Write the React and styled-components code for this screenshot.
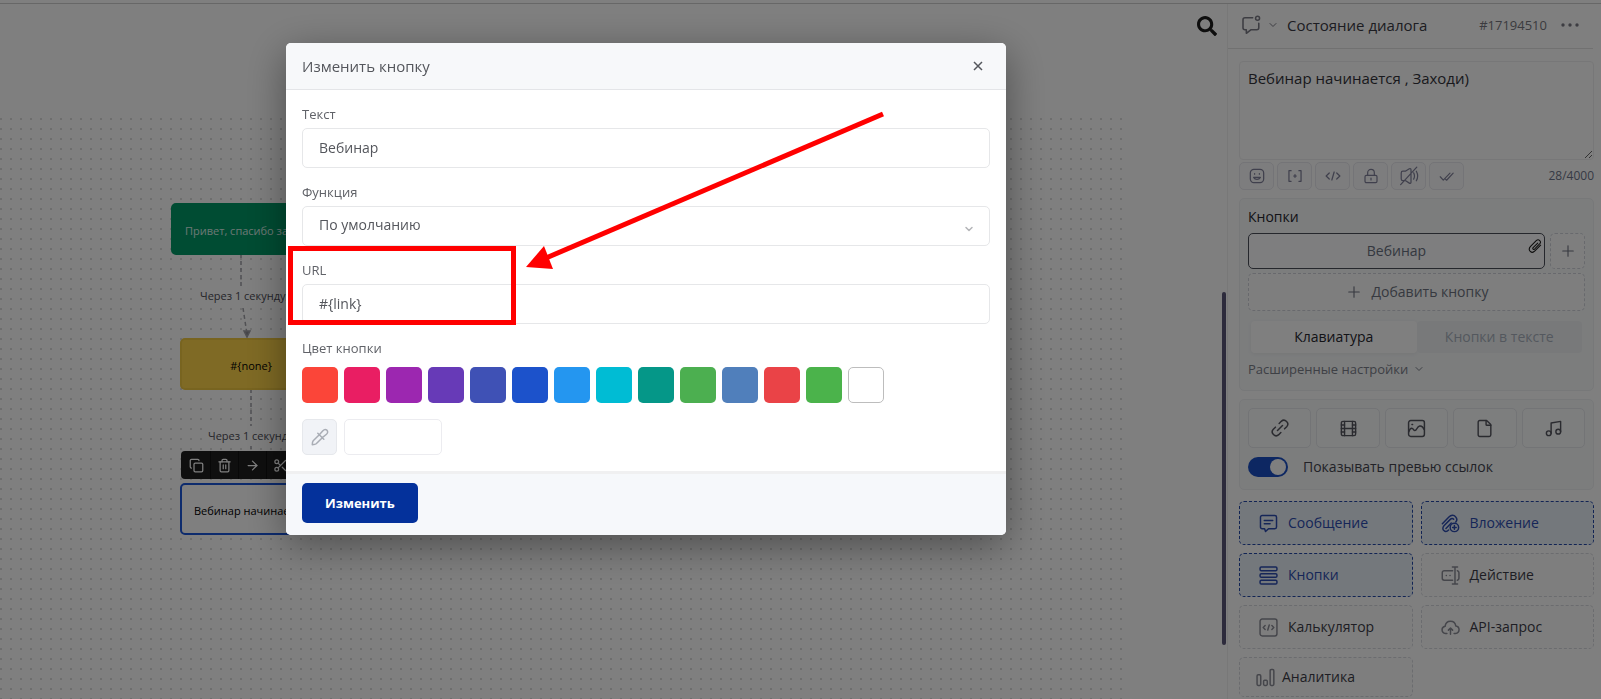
import React, { useState } from 'react';
import styled, { createGlobalStyle, css } from 'styled-components';
import {
  ArrowRight, ChevronDown, Copy, File, Film, Lock, Music, Plus, Scissors, Trash2,
} from 'lucide-react';
import { FaSearch } from 'react-icons/fa';

const GlobalStyle = createGlobalStyle`
  * {
    box-sizing: border-box;
  }
  body {
    margin: 0;
    background: #ffffff;
    color: #3b3f4a;
    font-family: 'Open Sans', 'Noto Sans', sans-serif;
    font-size: 14px;
    line-height: 20px;
  }
  button, input, select, textarea {
    font: inherit;
    color: inherit;
    margin: 0;
  }
`;

const Page = styled.div`
  display: flex;
  flex-direction: column;
  height: 100vh;
  overflow: hidden;
`;
const TopLine = styled.div`
  height: 4px;
  flex: none;
  border-bottom: 1px solid #cfcfcf;
`;
const Workspace = styled.div`
  display: flex;
  flex: 1;
  min-height: 0;
`;

/* canvas with the scheme */
const Canvas = styled.main`
  position: relative;
  flex: 1;
  min-width: 0;
  padding: 110px 100px 0 0;
`;
const Dots = styled.div`
  height: 100%;
  background-image: radial-gradient(circle at 1px 5px, #8c8c8c, transparent 1px);
  background-size: 10px 10px;
`;
const SearchButton = styled.button`
  position: absolute;
  top: 12px;
  right: 10px;
  padding: 0;
  border: 0;
  background: none;
  color: #1c1c1c;
  line-height: 0;
`;
const ScrollThumb = styled.div`
  position: absolute;
  top: 288px;
  right: 1px;
  width: 4px;
  height: 353px;
  border-radius: 2px;
  background: #5a5678;
`;
const Edges = styled.svg`
  position: absolute;
  left: 0;
  top: 0;
  width: 400px;
  height: 500px;
  fill: none;
  stroke: #a0a0a6;
  stroke-width: 1.5;
  stroke-dasharray: 4 3;
`;
const Node = styled.div`
  position: absolute;
  left: ${({ $x }) => $x}px;
  top: ${({ $y }) => $y}px;
  width: 142px;
  height: 52px;
  padding: 3px 12px 0;
  display: flex;
  align-items: center;
  justify-content: ${({ $center }) => ($center ? 'center' : 'flex-start')};
  border: 2px solid ${({ $border }) => $border};
  border-radius: 5px;
  background: ${({ $bg }) => $bg};
  color: ${({ $color }) => $color || '#000000'};
  font-size: 11px;
  white-space: nowrap;
  overflow: hidden;
`;
const EdgeLabel = styled.div`
  position: absolute;
  left: ${({ $x }) => $x}px;
  top: ${({ $y }) => $y}px;
  background: #ffffff;
  color: #4c4c55;
  font-size: 11px;
  white-space: nowrap;
`;
const NodeToolbar = styled.div`
  position: absolute;
  left: 181px;
  top: 447px;
  display: flex;
  height: 28px;
  padding-left: 2px;
  border-radius: 4px;
  background: #1f1f1f;
  overflow: hidden;
`;
const NodeTool = styled.button`
  width: 28px;
  padding: 0;
  display: flex;
  align-items: center;
  justify-content: center;
  border: 0;
  border-right: 1px solid #111111;
  background: none;
  color: #ffffff;
`;

/* right panel */
const Sidebar = styled.aside`
  width: 374px;
  flex: none;
  border-left: 1px solid #f0f0f0;
  display: flex;
  flex-direction: column;
`;
const SideHeader = styled.header`
  height: 45px;
  flex: none;
  margin-right: 8px;
  padding: 0 8px 2px 13px;
  display: flex;
  align-items: center;
  gap: 6px;
  border-bottom: 1px solid #e2e2e2;
  color: #7a7a85;
`;
const SideTitle = styled.h1`
  flex: 1;
  margin: 0 0 0 2px;
  color: #3a3a44;
  font-size: 15px;
  font-weight: 400;
`;
const Hash = styled.span`
  margin-right: 2px;
  color: #777780;
  font-size: 13px;
`;
const PlainButton = styled.button`
  padding: 0;
  border: 0;
  background: none;
  color: inherit;
  line-height: 0;
`;
const SideBody = styled.div`
  padding: 12px 7px 0 11px;
  display: flex;
  flex-direction: column;
  gap: 8px;
`;
const MessageBlock = styled.div`
  display: flex;
  flex-direction: column;
  gap: 2px;
`;
const Message = styled.textarea`
  display: block;
  width: 100%;
  height: 99px;
  padding: 6px 8px;
  border: 1px solid #efeff1;
  border-radius: 4px;
  outline: 0;
  background: #fefefe;
  color: #33333a;
  font-size: 15px;
`;
const FormatBar = styled.div`
  display: flex;
  align-items: center;
  gap: 3px;
`;
const FormatButton = styled.button`
  width: 35px;
  height: 28px;
  padding: 0;
  display: flex;
  align-items: center;
  justify-content: center;
  border: 1px solid #e8e8ee;
  border-radius: 5px;
  background: #fafafc;
  color: #80819a;
`;
const Counter = styled.span`
  margin-left: auto;
  color: #6d748a;
  font-size: 12px;
`;
const Card = styled.section`
  padding: 8px;
  display: flex;
  flex-direction: column;
  border: 1px solid #eff1f3;
  border-radius: 5px;
  background: #f8fafb;
`;
const CardTitle = styled.h2`
  margin: 0 0 6px;
  color: #26262e;
  font-size: 14px;
  font-weight: 500;
`;
const ButtonRow = styled.div`
  display: flex;
  gap: 5px;
  margin-bottom: 4px;
`;
const KeyButton = styled.button`
  position: relative;
  flex: 1;
  height: 36px;
  border: 1px solid #4a4e58;
  border-radius: 5px;
  background: #fdfdfe;
  color: #697080;
  font-size: 14px;
`;
const ClipMark = styled.svg`
  position: absolute;
  top: 5px;
  right: 2px;
  fill: none;
  stroke: #1c1c1c;
`;
const DashedButton = styled.button`
  height: ${({ $square }) => ($square ? 36 : 38)}px;
  width: ${({ $square }) => ($square ? '35px' : 'auto')};
  padding: 0;
  display: flex;
  align-items: center;
  justify-content: center;
  gap: 9px;
  border: 1px dashed #d0d3da;
  border-radius: 5px;
  background: #fcfdfd;
  color: #6e7380;
  font-size: 14px;
`;
const Tabs = styled.div`
  display: flex;
  height: 32px;
  margin: 10px 3px 0;
`;
const Tab = styled.button`
  flex: 1;
  padding: 0;
  border: 0;
  border-radius: 4px;
  background: ${({ $active }) => ($active ? '#ffffff' : '#f0f3f5')};
  color: ${({ $active }) => ($active ? '#26262e' : '#a9b1bd')};
  box-shadow: ${({ $active }) => ($active ? '0 1px 4px rgba(0, 0, 0, 0.06)' : 'none')};
`;
const More = styled.button`
  margin: 5px 0 2px;
  padding: 0;
  display: flex;
  align-items: center;
  gap: 5px;
  border: 0;
  background: none;
  color: #7c808a;
  font-size: 13px;
  line-height: 22px;
`;
const MediaGrid = styled.div`
  display: grid;
  grid-template-columns: repeat(5, 1fr);
  gap: 5px;
`;
const MediaButton = styled.button`
  height: 40px;
  padding: 0;
  display: flex;
  align-items: center;
  justify-content: center;
  border: 1px solid #e6e8ec;
  border-radius: 5px;
  background: #fbfcfd;
  color: #55565f;
`;
const PreviewRow = styled.label`
  display: flex;
  align-items: center;
  gap: 15px;
  margin: 8px 0 3px;
  line-height: 22px;
  color: #44454f;
`;
const Switch = styled.input`
  appearance: none;
  width: 40px;
  height: 20px;
  padding: 2px;
  border-radius: 10px;
  background: #c5c9d2;
  &::before {
    content: '';
    display: block;
    width: 16px;
    height: 16px;
    border-radius: 50%;
    background: #ffffff;
  }
  &:checked {
    background: #1a4fc4;
  }
  &:checked::before {
    margin-left: auto;
  }
`;
const TileGrid = styled.div`
  display: grid;
  grid-template-columns: 1fr 1fr;
  grid-template-rows: repeat(3, 44px) 40px;
  gap: 8px;
  margin-top: 3px;
`;
const Tile = styled.button`
  padding: 0 19px;
  display: flex;
  align-items: center;
  gap: 10px;
  border: 1px dashed #d6d8de;
  border-radius: 5px;
  background: #fdfdfd;
  color: #3c3d48;
  font-size: 14px;
  svg {
    color: #8b8c96;
  }
  ${({ $compact }) => $compact && css`
    padding: 0 16px;
    gap: 7px;
  `}
  ${({ $active }) => $active && css`
    border-color: #2448a8;
    background: #e9f0f8;
    color: #2c4cb0;
    svg {
      color: #2c4cb0;
    }
  `}
`;

/* modal */
const Backdrop = styled.div`
  position: fixed;
  inset: 0;
  display: flex;
  align-items: flex-start;
  justify-content: center;
  padding: 43px 309px 0 0;
  background: rgba(0, 0, 0, 0.5);
`;
const Dialog = styled.form`
  position: relative;
  width: 720px;
  border-radius: 5px;
  background: #ffffff;
  color: #54565c;
  box-shadow: 0 10px 40px rgba(0, 0, 0, 0.4);
`;
const DialogHeader = styled.div`
  height: 47px;
  padding: 0 20px 0 16px;
  display: flex;
  align-items: center;
  justify-content: space-between;
  border-bottom: 1px solid #e4e5e8;
  border-radius: 5px 5px 0 0;
  background: #f7f8fa;
`;
const DialogTitle = styled.h2`
  margin: 0;
  font-size: 15px;
  font-weight: 400;
`;
const DialogBody = styled.div`
  padding: 14px 16px 16px;
`;
const Field = styled.div`
  position: relative;
  display: flex;
  flex-direction: column;
  gap: 4px;
  margin-bottom: 14px;
`;
const Label = styled.label`
  font-size: 13px;
  color: #606268;
`;
const controlStyle = css`
  width: 100%;
  height: 40px;
  padding: 0 16px 2px;
  border: 1px solid #e6e7e9;
  border-radius: 5px;
  outline: 0;
  background: #ffffff;
  font-size: 14px;
`;
const TextInput = styled.input`
  ${controlStyle}
`;
const Select = styled.select`
  ${controlStyle}
  appearance: none;
`;
const SelectArrow = styled(ChevronDown)`
  position: absolute;
  right: 15px;
  bottom: 11px;
  color: #b4b5b8;
  pointer-events: none;
`;
const Palette = styled.div`
  display: flex;
  gap: 6px;
  margin: 5px 0 2px;
`;
const Swatch = styled.button`
  width: 36px;
  height: 36px;
  padding: 0;
  border: ${({ $color }) => ($color === '#ffffff' ? '1px solid #bdbdbd' : '0')};
  border-radius: 5px;
  background: ${({ $color }) => $color};
`;
const CustomColor = styled.div`
  display: flex;
  gap: 7px;
`;
const Picker = styled.button`
  width: 35px;
  height: 36px;
  padding: 0;
  display: flex;
  align-items: center;
  justify-content: center;
  border: 1px solid #e6e8ec;
  border-radius: 5px;
  background: #f1f3f7;
`;
const HexInput = styled.input`
  width: 98px;
  height: 36px;
  padding: 0 8px;
  border: 1px solid #ececf0;
  border-radius: 5px;
  outline: 0;
`;
const DialogFooter = styled.div`
  padding: 9px 16px 12px;
  border-top: 3px solid #f0f0f1;
  border-radius: 0 0 5px 5px;
  background: #f6f8fb;
`;
const Submit = styled.button`
  height: 40px;
  padding: 0 23px;
  border: 0;
  border-radius: 5px;
  background: #04319b;
  color: #ffffff;
  font-size: 13px;
  font-weight: 700;
`;

/* red pointer marks over the dialog */
const Frame = styled.div`
  position: absolute;
  left: 2px;
  top: 203px;
  width: 228px;
  height: 79px;
  border: 5px solid #ff0000;
  pointer-events: none;
`;
const Arrow = styled.svg`
  position: absolute;
  left: 240px;
  top: 60px;
  width: 360px;
  height: 180px;
  pointer-events: none;
`;

function Svg({ size = 18, children }) {
  return (
    <svg
      width={size}
      height={size}
      viewBox="0 0 18 18"
      fill="none"
      stroke="currentColor"
      strokeWidth="1.4"
      strokeLinecap="round"
      strokeLinejoin="round"
    >
      {children}
    </svg>
  );
}

const stateIcon = (
  <Svg size={20}>
    <path d="M10.5 2.5H3.6c-1 0-1.8.8-1.8 1.8v7.2c0 1 .8 1.8 1.8 1.8h1.2v3.2l4-3.2h5.4c1 0 1.8-.8 1.8-1.8V7.4" />
    <circle cx="14.9" cy="3" r="1.8" />
  </Svg>
);

const formatIcons = {
  'Эмодзи': (
    <Svg size={16}>
      <rect x="1.5" y="1.5" width="15" height="15" rx="4" />
      <path d="M6.3 6.2v.8M11.7 6.2v.8M5.2 10.6c1.6 2.8 6 2.8 7.6 0z" />
    </Svg>
  ),
  'Переменная': (
    <Svg size={16}>
      <path d="M4.6 3H2.2v12h2.4M13.4 3h2.4v12h-2.4M7.5 9h3M9 7.5v3" />
    </Svg>
  ),
  'Код': (
    <Svg size={16}>
      <path d="M4.8 5.6L1.3 9l3.500 3.400M13.200 5.600L16.700 9l-3.500 3.400M10.300 4.500L7.700 13.500" />
    </Svg>
  ),
  'Защита': (
    <Lock size={16} strokeWidth={1.8}>
      <path d="M12 15v3" />
    </Lock>
  ),
  'Без звука': (
    <Svg size={20}>
      <path
        strokeWidth="1.1"
        d="M2 6.200c0-.9.600-1.500 1.500-1.500h2.200L9.300 2.500c.8-.4 1.500 0 1.500.8v11.400c0 .8-.7 1.200-1.500.7l-3.600-2.300H3.500c-.9 0-1.500-.6-1.500-1.500zM13.200 6.200c.9 1.700.9 3.900 0 5.600M15.600 4.700c1.500 2.700 1.500 5.900 0 8.600M16 1L1.500 16.800"
      />
    </Svg>
  ),
  'Прочитано': (
    <Svg size={15}>
      <path d="M1.500 9.300l3.600 4 8.100-8.300M7.800 12.200l1.300 1.300L17 5" />
    </Svg>
  ),
};

const imageIcon = (
  <Svg size={19}>
    <rect x="1.5" y="1.5" width="15" height="15" rx="2" />
    <path d="M1.800 12c.6-2.200 1.500-3.300 2.700-3.300 1.600 0 1.500 2.300 3 2.300 1.900 0 1.700-3.800 4.500-4.300 1.900-.3 3.400 1.300 4.200 3.300M4.700 5.200h.6" />
  </Svg>
);

const tiles = [
  {
    name: 'Сообщение',
    active: true,
    icon: (
      <Svg size={19}>
        <path d="M3 1.500h12c.9 0 1.600.7 1.600 1.600v9.200c0 .9-.7 1.600-1.600 1.600H9l-2.800 2.700-.9-2.700H3c-.9 0-1.600-.7-1.600-1.600V3.100c0-.9.7-1.600 1.600-1.600zM5 6.200h8M5 9.300h5.500" />
      </Svg>
    ),
  },
  {
    name: 'Вложение',
    active: true,
    icon: (
      <Svg size={19}>
        <path d="M1.300 9.200l6.200-6.400c2-2 4.800-2 6.300-.3 1.400 1.500 1.400 3.600.2 5M7.200 15.200c-1.400 1.500-3.300 1.600-4.500.5-1.300-1.200-1.200-3.100.1-4.500l6-6.100c1-1 2.400-1.100 3.200-.2M4.700 13.700l5-5.100" />
        <circle cx="12.7" cy="12.7" r="4" />
        <path d="M12.700 11v3.400M11 12.700h3.400" />
      </Svg>
    ),
  },
  {
    name: 'Кнопки',
    active: true,
    icon: (
      <Svg size={19}>
        <rect x="1" y="1" width="16" height="3.4" rx="1.2" />
        <rect x="1" y="7.3" width="16" height="3.4" rx="1.2" />
        <rect x="1" y="13.6" width="16" height="3.4" rx="1.2" />
      </Svg>
    ),
  },
  {
    name: 'Действие',
    icon: (
      <Svg size={19}>
        <path d="M11 4.500H3c-1 0-1.800.8-1.800 1.800v5.400c0 1 .8 1.800 1.800 1.800h8M15.500 4.500c.9.200 1.500.900 1.500 1.800v5.400c0 .9-.6 1.600-1.500 1.800M10.800 1h4.900M10.800 17h4.900M13.250 1v16M5 9h.1M8.500 9h.1" />
      </Svg>
    ),
  },
  {
    name: 'Калькулятор',
    icon: (
      <Svg size={19}>
        <rect x="1" y="1" width="16" height="16" rx="2" />
        <path d="M5.800 7.200L4 9l1.800 1.800M12.200 7.200L14 9l-1.800 1.800M9.700 6.600l-1.400 4.800" />
      </Svg>
    ),
  },
  {
    name: 'API-запрос',
    icon: (
      <Svg size={19}>
        <path d="M5.600 14.700H4.300C2.400 14.500 1 13 1 11.200c0-1.700 1.200-3 2.900-3.300C4.200 5 6.300 3 9 3c2.600 0 4.600 1.900 5 4.500 1.800.2 3.100 1.700 3.100 3.500 0 2-1.500 3.600-3.400 3.700h-1.300M9 15.500V9.700M7 11.500l2-2 2 2" />
      </Svg>
    ),
  },
  {
    name: 'Аналитика',
    compact: true,
    icon: (
      <Svg size={19}>
        <rect x="1" y="6.5" width="3.5" height="10" rx="1" />
        <rect x="7.2" y="11.5" width="3.5" height="5" rx="1" />
        <rect x="13.4" y="1.5" width="3.5" height="15" rx="1" />
      </Svg>
    ),
  },
];

const colors = [
  '#fb4539', '#e91e63', '#9c27b0', '#673ab7', '#3f51b5', '#1c52cb', '#2496f0',
  '#00bcd4', '#059788', '#4caf50', '#507fbb', '#ea4347', '#4bb34b', '#ffffff',
];

function Scheme() {
  return (
    <Canvas>
      <Dots />
      <Edges viewBox="0 0 400 500">
        <path d="M241 250V284M243 304L247 330" />
        <path d="M251 385V470" />
        <path d="M244 327h6l-3 6zM248 466h6l-3 6z" fill="#8c8c94" strokeDasharray="none" />
      </Edges>
      <Node $x={171} $y={199} $bg="#009966" $border="#009966" $color="#d8eee6">Привет, спасибо за</Node>
      <EdgeLabel $x={200} $y={282}>Через 1 секунду,</EdgeLabel>
      <Node $x={180} $y={334} $bg="#ffd54a" $border="#f0c840" $center>{'#{none}'}</Node>
      <EdgeLabel $x={208} $y={422}>Через 1 секунду</EdgeLabel>
      <NodeToolbar>
        <NodeTool type="button" aria-label="Копировать"><Copy size={15} strokeWidth={2} /></NodeTool>
        <NodeTool type="button" aria-label="Удалить"><Trash2 size={15} strokeWidth={2} /></NodeTool>
        <NodeTool type="button" aria-label="Перейти"><ArrowRight size={15} strokeWidth={2} /></NodeTool>
        <NodeTool type="button" aria-label="Вырезать"><Scissors size={15} strokeWidth={2} /></NodeTool>
      </NodeToolbar>
      <Node $x={180} $y={479} $bg="#ffffff" $border="#1a56db">Вебинар начинается</Node>
      <SearchButton type="button" aria-label="Поиск"><FaSearch size={20} /></SearchButton>
      <ScrollThumb />
    </Canvas>
  );
}

function SidePanel() {
  const [message, setMessage] = useState('Вебинар начинается , Заходи)');
  const [preview, setPreview] = useState(true);
  const [tab, setTab] = useState('Клавиатура');

  return (
    <Sidebar>
      <SideHeader>
        {stateIcon}
        <ChevronDown size={12} />
        <SideTitle>Состояние диалога</SideTitle>
        <Hash>#17194510</Hash>
        <PlainButton type="button" aria-label="Меню">
          <svg width="30" height="6" viewBox="0 0 30 6" fill="currentColor">
            <circle cx="8" cy="3" r="1.7" />
            <circle cx="15" cy="3" r="1.7" />
            <circle cx="22" cy="3" r="1.7" />
          </svg>
        </PlainButton>
      </SideHeader>
      <SideBody>
        <MessageBlock>
          <Message
            aria-label="Сообщение"
            spellCheck={false}
            value={message}
            onChange={(e) => setMessage(e.target.value)}
          />
          <FormatBar>
            {Object.keys(formatIcons).map((name) => (
              <FormatButton key={name} type="button" aria-label={name}>{formatIcons[name]}</FormatButton>
            ))}
            <Counter>{message.length}/4000</Counter>
          </FormatBar>
        </MessageBlock>

        <Card>
          <CardTitle>Кнопки</CardTitle>
          <ButtonRow>
            <KeyButton type="button">
              Вебинар
              <ClipMark width="14" height="14" viewBox="0 0 18 18" strokeWidth="1.4" strokeLinecap="round">
                <path d="M12.500 5.200L6.600 11.200c-1.200 1.300.5 3 1.800 1.800l6.500-6.600c3-3.200-1.200-7.200-4.300-4.200L3.300 9.600c-4.400 4.600 1.400 10 5.600 5.800l7.300-7.500" />
              </ClipMark>
            </KeyButton>
            <DashedButton type="button" $square aria-label="Добавить"><Plus size={18} strokeWidth={1.5} /></DashedButton>
          </ButtonRow>
          <DashedButton type="button"><Plus size={18} strokeWidth={1.5} />Добавить кнопку</DashedButton>
          <Tabs>
            {['Клавиатура', 'Кнопки в тексте'].map((name) => (
              <Tab key={name} type="button" $active={tab === name} onClick={() => setTab(name)}>{name}</Tab>
            ))}
          </Tabs>
          <More type="button">Расширенные настройки <ChevronDown size={12} /></More>
        </Card>

        <Card>
          <MediaGrid>
            <MediaButton type="button" aria-label="Ссылка">
              <svg width="20" height="20" viewBox="0 0 24 24" fill="none" stroke="currentColor" strokeWidth="1.8" strokeLinecap="round">
                <path d="M9 15l6-6M11 6.500l2.500-2.500a4.600 4.600 0 0 1 6.500 6.500L17.500 13M13 17.500L10.500 20A4.600 4.600 0 0 1 4 13.500L6.500 11" />
              </svg>
            </MediaButton>
            <MediaButton type="button" aria-label="Видео"><Film size={19} strokeWidth={1.8} /></MediaButton>
            <MediaButton type="button" aria-label="Картинка">{imageIcon}</MediaButton>
            <MediaButton type="button" aria-label="Файл"><File size={19} strokeWidth={1.8} /></MediaButton>
            <MediaButton type="button" aria-label="Аудио"><Music size={19} strokeWidth={1.8} /></MediaButton>
          </MediaGrid>
          <PreviewRow>
            <Switch type="checkbox" role="switch" checked={preview} onChange={(e) => setPreview(e.target.checked)} />
            Показывать превью ссылок
          </PreviewRow>
        </Card>

        <TileGrid>
          {tiles.map((tile) => (
            <Tile key={tile.name} type="button" $active={tile.active} $compact={tile.compact}>
              {tile.icon}
              {tile.name}
            </Tile>
          ))}
        </TileGrid>
      </SideBody>
    </Sidebar>
  );
}

function EditButtonDialog() {
  const [text, setText] = useState('Вебинар');
  const [url, setUrl] = useState('#{link}');
  const [hex, setHex] = useState('');

  return (
    <Dialog onSubmit={(e) => e.preventDefault()}>
      <DialogHeader>
        <DialogTitle>Изменить кнопку</DialogTitle>
        <PlainButton type="button" aria-label="Закрыть">
          <svg width="16" height="16" viewBox="0 0 16 16" stroke="currentColor" strokeWidth="1.5">
            <path d="M4 4l8 8M12 4l-8 8" />
          </svg>
        </PlainButton>
      </DialogHeader>
      <DialogBody>
        <Field>
          <Label htmlFor="text">Текст</Label>
          <TextInput id="text" value={text} onChange={(e) => setText(e.target.value)} />
        </Field>
        <Field>
          <Label htmlFor="func">Функция</Label>
          <Select id="func" defaultValue="default">
            <option value="default">По умолчанию</option>
          </Select>
          <SelectArrow size={12} strokeWidth={3} />
        </Field>
        <Field>
          <Label htmlFor="url">URL</Label>
          <TextInput id="url" value={url} onChange={(e) => setUrl(e.target.value)} />
        </Field>
        <Field>
          <Label htmlFor="hex">Цвет кнопки</Label>
          <Palette>
            {colors.map((color) => (
              <Swatch key={color} type="button" aria-label={color} $color={color} onClick={() => setHex(color)} />
            ))}
          </Palette>
        </Field>
        <CustomColor>
          <Picker type="button" aria-label="Пипетка">
            <svg width="18" height="18" viewBox="0 0 18 18" fill="none" stroke="#a9adb5" strokeWidth="1.5" strokeLinecap="round" strokeLinejoin="round">
              <path d="M6.800 5.200l6 6M8.300 6.700L2.200 12.800c-.6.700-.9 2.200-.9 3.900 1.700 0 3.200-.3 3.900-.9l6.100-6.100M8.300 6.700l3.600-4c1.200-1.300 2.800-1.500 4-.5 1.100 1.200 1 2.800-.4 4l-4.200 3.500" />
            </svg>
          </Picker>
          <HexInput id="hex" value={hex} onChange={(e) => setHex(e.target.value)} />
        </CustomColor>
      </DialogBody>
      <DialogFooter>
        <Submit type="submit">Изменить</Submit>
      </DialogFooter>
      <Frame />
      <Arrow viewBox="0 0 360 180" aria-hidden="true">
        <path d="M357 11L20 155" stroke="#ff0000" strokeWidth="5" />
        <path d="M0 164L18 143L27 166z" fill="#ff0000" />
      </Arrow>
    </Dialog>
  );
}

function App() {
  return (
    <>
      <GlobalStyle />
      <Page>
        <TopLine />
        <Workspace>
          <Scheme />
          <SidePanel />
        </Workspace>
      </Page>
      <Backdrop>
        <EditButtonDialog />
      </Backdrop>
    </>
  );
}

export default App;
